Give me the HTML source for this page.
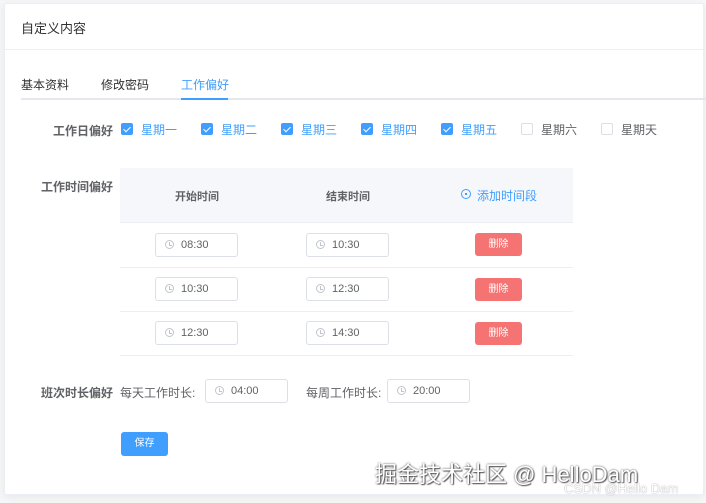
<!DOCTYPE html>
<html><head><meta charset="utf-8"><style>
*{margin:0;padding:0;box-sizing:border-box}
body{width:706px;height:503px;background:#f5f6f7;font-family:"Liberation Sans","Noto Sans CJK SC",sans-serif;position:relative;overflow:hidden;color:#606266}
.card{position:absolute;left:4px;top:3px;width:700px;height:492px;background:#fff;border:1px solid #ebeef5;border-radius:3px;box-shadow:0 2px 8px rgba(0,0,0,.06)}
.a{position:absolute;white-space:nowrap}
.cb{position:absolute;width:12px;height:12px;border-radius:2px;background:#409eff}
.cb::after{content:"";position:absolute;left:4px;top:1.5px;width:3px;height:6px;border:solid #fff;border-width:0 1.3px 1.3px 0;transform:rotate(45deg)}
.cb.off{background:#fff;border:1px solid #dcdfe6}
.cb.off::after{display:none}
.inp{position:absolute;width:83px;height:24px;border:1px solid #dcdfe6;border-radius:3px;font-size:11px;color:#606266;line-height:22px;padding-left:25px}
.clk{position:absolute;left:9px;top:6px;width:9px;height:9px;border:1px solid #c0c4cc;border-radius:50%}
.clk::after{content:"";position:absolute;left:3px;top:1px;width:2px;height:3px;border:solid #c0c4cc;border-width:0 0 1px 1px}
.del{position:absolute;left:475px;width:47px;height:23px;background:#f56c6c;opacity:.95;border-radius:3px;color:#fff;font-size:10px;text-align:center;line-height:23px}
.line{position:absolute;left:120px;width:453px;height:1px;background:#ebeef5}
</style></head><body>
<div class="card"></div>
<div class="a" style="left:21px;top:18px;font-size:13px;color:#303133">自定义内容</div>
<div class="a" style="left:4px;top:49px;width:700px;height:1px;background:#ebeef5"></div>
<div class="a" style="left:21px;top:76px;font-size:12px;color:#303133">基本资料</div>
<div class="a" style="left:101px;top:76px;font-size:12px;color:#303133">修改密码</div>
<div class="a" style="left:181px;top:76px;font-size:12px;color:#409eff">工作偏好</div>
<div class="a" style="left:21px;top:98px;width:685px;height:2px;background:#e4e7ed"></div>
<div class="a" style="left:181px;top:98px;width:47px;height:2px;background:#409eff"></div>

<div class="a" style="left:53px;top:122px;font-size:12px;color:#606266;font-weight:bold">工作日偏好</div>
<div class="cb" style="left:121px;top:123px"></div><div class="a" style="left:141px;top:121px;font-size:12px;color:#409eff">星期一</div>
<div class="cb" style="left:201px;top:123px"></div><div class="a" style="left:221px;top:121px;font-size:12px;color:#409eff">星期二</div>
<div class="cb" style="left:281px;top:123px"></div><div class="a" style="left:301px;top:121px;font-size:12px;color:#409eff">星期三</div>
<div class="cb" style="left:361px;top:123px"></div><div class="a" style="left:381px;top:121px;font-size:12px;color:#409eff">星期四</div>
<div class="cb" style="left:441px;top:123px"></div><div class="a" style="left:461px;top:121px;font-size:12px;color:#409eff">星期五</div>
<div class="cb off" style="left:521px;top:123px"></div><div class="a" style="left:541px;top:121px;font-size:12px;color:#606266">星期六</div>
<div class="cb off" style="left:601px;top:123px"></div><div class="a" style="left:621px;top:121px;font-size:12px;color:#606266">星期天</div>

<div class="a" style="left:41px;top:178px;font-size:12px;font-weight:bold">工作时间偏好</div>
<div class="a" style="left:120px;top:168px;width:453px;height:54px;background:#f5f7fa"></div>
<div class="a" style="left:175px;top:188px;font-size:11px;font-weight:bold;color:#606266">开始时间</div>
<div class="a" style="left:326px;top:188px;font-size:11px;font-weight:bold;color:#606266">结束时间</div>
<div class="a" style="left:461px;top:189px;width:10px;height:10px;border:1px solid #409eff;border-radius:50%"></div>
<div class="a" style="left:465px;top:193px;width:2px;height:2px;background:#409eff"></div>
<div class="a" style="left:477px;top:187px;font-size:12px;color:#409eff">添加时间段</div>
<div class="line" style="top:222px"></div>
<div class="inp" style="left:155px;top:233px"><i class="clk"></i>08:30</div>
<div class="inp" style="left:306px;top:233px"><i class="clk"></i>10:30</div>
<div class="del" style="top:233px">删除</div>
<div class="line" style="top:267px"></div>
<div class="inp" style="left:155px;top:277px"><i class="clk"></i>10:30</div>
<div class="inp" style="left:306px;top:277px"><i class="clk"></i>12:30</div>
<div class="del" style="top:278px">删除</div>
<div class="line" style="top:311px"></div>
<div class="inp" style="left:155px;top:321px"><i class="clk"></i>12:30</div>
<div class="inp" style="left:306px;top:321px"><i class="clk"></i>14:30</div>
<div class="del" style="top:322px">删除</div>
<div class="line" style="top:355px"></div>

<div class="a" style="left:41px;top:384px;font-size:12px;font-weight:bold">班次时长偏好</div>
<div class="a" style="left:120px;top:384px;font-size:12px">每天工作时长:</div>
<div class="inp" style="left:205px;top:379px"><i class="clk"></i>04:00</div>
<div class="a" style="left:306px;top:384px;font-size:12px">每周工作时长:</div>
<div class="inp" style="left:387px;top:379px"><i class="clk"></i>20:00</div>

<div class="a" style="left:121px;top:432px;width:47px;height:24px;background:#409eff;border-radius:3px;color:#fff;font-size:10px;text-align:center;line-height:24px">保存</div>

<div class="a" style="left:375px;top:457px;font-size:22px;color:#fff;text-shadow:0 0 2px #444,1px 1px 1px #666">掘金技术社区 @ HelloDam</div>
<div class="a" style="left:564px;top:481px;font-size:13px;color:#fff;text-shadow:0 0 1px #777">CSDN @Hello Dam</div>
</body></html>
